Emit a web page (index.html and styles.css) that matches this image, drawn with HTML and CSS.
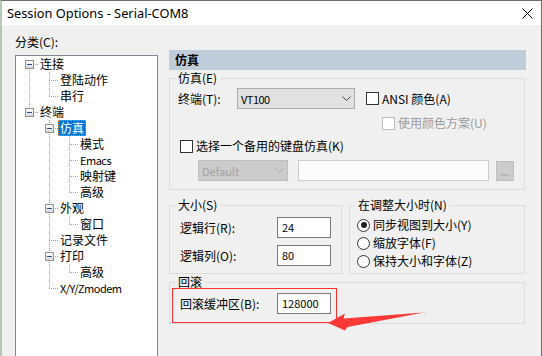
FILE: index.html
```html
<!DOCTYPE html>
<html lang="zh-CN">
<head>
<meta charset="utf-8">
<title>Session Options - Serial-COM8</title>
<link rel="stylesheet" href="styles.css">
</head>
<body>
<div class="window">
  <div class="titlebar">
    <span class="title">Session Options - Serial-COM8</span>
    <svg class="close" width="11" height="11" viewBox="0 0 11 11"><path d="M0.5 0.5L10.5 10.5M10.5 0.5L0.5 10.5" stroke="#000" stroke-width="1" fill="none"/></svg>
  </div>
  <div class="main">
    <div class="left">
      <div class="cat-label">分类(C):</div>
      <div class="tree">
        <div class="row"><span class="c vbh"><span class="box"><i></i></span></span><span class="t">连接</span></div>
        <div class="row"><span class="c v"></span><span class="c vh"></span><span class="t">登陆动作</span></div>
        <div class="row"><span class="c v"></span><span class="c vth"></span><span class="t">串行</span></div>
        <div class="row"><span class="c vth"><span class="box"><i></i></span></span><span class="t">终端</span></div>
        <div class="row"><span class="c"></span><span class="c vh"><span class="box"><i></i></span></span><span class="t sel">仿真</span></div>
        <div class="row"><span class="c"></span><span class="c v"></span><span class="c vh"></span><span class="t">模式</span></div>
        <div class="row"><span class="c"></span><span class="c v"></span><span class="c vh"></span><span class="t lat tight">Emacs</span></div>
        <div class="row"><span class="c"></span><span class="c v"></span><span class="c vh"></span><span class="t">映射键</span></div>
        <div class="row"><span class="c"></span><span class="c v"></span><span class="c vth"></span><span class="t">高级</span></div>
        <div class="row"><span class="c"></span><span class="c vh"><span class="box"><i></i></span></span><span class="t">外观</span></div>
        <div class="row"><span class="c"></span><span class="c v"></span><span class="c vth"></span><span class="t">窗口</span></div>
        <div class="row"><span class="c"></span><span class="c vh"></span><span class="t">记录文件</span></div>
        <div class="row"><span class="c"></span><span class="c vh"><span class="box"><i></i></span></span><span class="t">打印</span></div>
        <div class="row"><span class="c"></span><span class="c v"></span><span class="c vth"></span><span class="t">高级</span></div>
        <div class="row"><span class="c"></span><span class="c vth"></span><span class="t lat tight">X/Y/Zmodem</span></div>
      </div>
    </div>
    <div class="right">
      <div class="header">仿真</div>

      <fieldset class="group g-emu">
        <legend>仿真(E)</legend>
        <div class="r1">
          <span class="lbl-t">终端(T):</span>
          <span class="combo vt"><span class="lat tight">VT100</span><span class="chev"><svg width="9" height="5" viewBox="0 0 9 5"><path d="M0.5 0.5L4.5 4.5L8.5 0.5" stroke="#444" fill="none"/></svg></span></span>
          <span class="cb ansi"></span><span class="cbt">ANSI 颜色(A)</span>
        </div>
        <div class="r2">
          <span class="cb dis"></span><span class="cbt">使用颜色方案(U)</span>
        </div>
        <div class="r3">
          <span class="cb"></span><span class="cbt">选择一个备用的键盘仿真(K)</span>
        </div>
        <div class="r4">
          <span class="combo def"><span class="lat">Default</span><span class="chev"><svg width="9" height="5" viewBox="0 0 9 5"><path d="M0.5 0.5L4.5 4.5L8.5 0.5" stroke="#a8a8a8" fill="none"/></svg></span></span>
          <span class="tf"></span>
          <span class="dots">...</span>
        </div>
      </fieldset>

      <div class="pair">
        <fieldset class="group g-size">
          <legend>大小(S)</legend>
          <div class="gbody size-body">
            <div class="fr"><span class="lbl">逻辑行(R):</span><span class="inp lat">24</span></div>
            <div class="fr"><span class="lbl">逻辑列(O):</span><span class="inp lat">80</span></div>
          </div>
        </fieldset>
        <fieldset class="group g-resize">
          <legend>在调整大小时(N)</legend>
          <div class="gbody resize-body">
            <div class="rr"><span class="rb"><i></i></span><span class="cbt">同步视图到大小(Y)</span></div>
            <div class="rr"><span class="rb"></span><span class="cbt">缩放字体(F)</span></div>
            <div class="rr"><span class="rb"></span><span class="cbt">保持大小和字体(Z)</span></div>
          </div>
        </fieldset>
      </div>

      <fieldset class="group g-scroll">
        <legend>回滚</legend>
        <div class="redbox">
          <div class="fr"><span class="lbl">回滚缓冲区(B):</span><span class="inp lat">128000</span></div>
        </div>
      </fieldset>
    </div>
  </div>
  <svg class="arrow" width="540" height="355" viewBox="2 1 540 355"><polygon points="328,323 345,313.5 343.5,318.5 424,312.5 347.5,327 345,330.5" fill="#ff3838"/></svg>
</div>
</body>
</html>
```

FILE: styles.css
```css
* { box-sizing: border-box; }
html, body { margin: 0; padding: 0; }
body {
  width: 542px;
  height: 356px;
  overflow: hidden;
  font-family: "Noto Sans CJK SC", "Noto Sans", sans-serif;
  font-size: 12px;
  color: #000;
  background: #f0f0f0;
}
.window {
  position: relative;
  width: 542px;
  height: 356px;
  background: #f0f0f0;
  border-top: 1px solid #707070;
  border-right: 1px solid #707070;
  border-left: 2px solid #b3c9b3;
  display: flex;
  flex-direction: column;
  overflow: hidden;
}
.titlebar {
  height: 24px;
  flex: none;
  background: #fff;
  display: flex;
  align-items: center;
  justify-content: space-between;
  padding: 0 8px 0 5px;
}
.title {
  font-family: "Noto Sans", "Open Sans", sans-serif;
  font-size: 12.8px;
  line-height: 16px;
  white-space: nowrap;
}
.close { display: block; }

.lat { font-size: 11px; }
.lat.tight { letter-spacing: -0.5px; }

.main { display: flex; flex: 1; min-height: 0; }
.left { flex: none; width: 156px; padding: 9px 0 0 13px; }
.cat-label { line-height: 16px; height: 16px; }
.tree {
  margin-top: 5px;
  width: 143px;
  height: 330px;
  border: 1px solid #828790;
  background: #fff;
  padding-left: 3px;
}
.row { display: flex; height: 16px; }
.c {
  flex: none;
  width: 20px;
  height: 16px;
  display: flex;
  align-items: flex-start;
  background-repeat: no-repeat;
}
.v {
  background-image: repeating-linear-gradient(to bottom, #a0a0a0 0 1px, transparent 1px 2px);
  background-size: 1px 16px;
  background-position: 10px 0;
}
.vh {
  background-image: repeating-linear-gradient(to bottom, #a0a0a0 0 1px, transparent 1px 2px),
                    repeating-linear-gradient(to right, #a0a0a0 0 1px, transparent 1px 2px);
  background-size: 1px 16px, 10px 1px;
  background-position: 10px 0, 10px 8px;
}
.vth {
  background-image: repeating-linear-gradient(to bottom, #a0a0a0 0 1px, transparent 1px 2px),
                    repeating-linear-gradient(to right, #a0a0a0 0 1px, transparent 1px 2px);
  background-size: 1px 9px, 10px 1px;
  background-position: 10px 0, 10px 8px;
}
.vbh {
  background-image: repeating-linear-gradient(to bottom, #a0a0a0 0 1px, transparent 1px 2px),
                    repeating-linear-gradient(to right, #a0a0a0 0 1px, transparent 1px 2px);
  background-size: 1px 8px, 10px 1px;
  background-position: 10px 8px, 10px 8px;
}
.box {
  width: 9px;
  height: 9px;
  margin: 4px 0 0 6px;
  border: 1px solid #919191;
  background: linear-gradient(#ffffff, #d9d9d9);
  display: flex;
  align-items: center;
  justify-content: center;
}
.box i { display: block; width: 5px; height: 1px; background: #2a4b8c; }
.t { padding: 0 1px; line-height: 16px; height: 16px; white-space: nowrap; }
.sel {
  background: #0078d7;
  color: #fff;
  margin-left: -1px;
  padding: 0 2px;
  outline: 1px dotted #ff8728;
  outline-offset: -1px;
}

.right {
  flex: none;
  margin-left: 11px;
  padding-top: 25px;
  width: 357px;
  display: flex;
  flex-direction: column;
  align-items: flex-start;
}
.header {
  width: 357px;
  height: 20px;
  background: #bfcddb;
  font-weight: bold;
  line-height: 20px;
  padding-left: 6px;
}
fieldset.group {
  margin: 0;
  padding: 0;
  min-width: 0;
  border: 1px solid #dcdcdc;
}
legend {
  padding: 0 3px;
  margin-left: 5px;
  line-height: 16px;
  height: 16px;
  white-space: nowrap;
}
.g-emu { width: 356px; margin-top: 10px; padding-bottom: 8px !important; }
.r1 { display: flex; align-items: center; height: 21px; margin-top: 2px; padding-left: 8px; }
.lbl-t { width: 59px; flex: none; }
.combo {
  flex: none;
  height: 21px;
  border: 1px solid #adadad;
  background: #e1e1e1;
  display: flex;
  align-items: center;
  justify-content: space-between;
  padding-left: 3px;
  line-height: 16px;
}
.chev { width: 16px; display: flex; justify-content: center; align-items: center; }
.chev svg { display: block; }
.combo.vt { width: 118px; }
.combo.def { width: 90px; background: #cccccc; border-color: #bfbfbf; color: #a0a0a0; }
.cb {
  flex: none;
  width: 13px;
  height: 13px;
  border: 1px solid #333;
  background: #fff;
}
.cb.ansi { margin-left: 11px; }
.cb.dis { border-color: #bcbcbc; background: #fff; }
.cbt { margin-left: 3px; line-height: 16px; white-space: nowrap; }
.r2 { display: flex; align-items: center; height: 16px; margin-top: 6px; padding-left: 212px; color: #9a9a9a; }
.r3 { display: flex; align-items: center; height: 16px; margin-top: 7px; padding-left: 10px; }
.r4 { display: flex; align-items: center; height: 21px; margin-top: 6px; padding-left: 28px; }
.tf {
  flex: none;
  width: 191px;
  height: 21px;
  margin-left: 10px;
  border: 1px solid #cccccc;
  background: #fbfbfb;
}
.dots {
  flex: none;
  width: 18px;
  height: 20px;
  margin-left: 7px;
  background: #cccccc;
  border: 1px solid #bfbfbf;
  color: #9a9a9a;
  text-align: center;
  line-height: 18px;
  font-size: 11px;
}

.pair { display: flex; gap: 7px; margin-top: 7px; }
.g-size { width: 173px; }
.g-resize { width: 176px; }
.size-body { padding: 4px 0 7px 10px; }
.fr { display: flex; align-items: center; height: 21px; }
.fr + .fr { margin-top: 7px; }
.lbl { width: 97px; flex: none; white-space: nowrap; }
.inp {
  flex: none;
  width: 54px;
  height: 21px;
  border: 1px solid #7a7a7a;
  background: #fff;
  padding-left: 4px;
  line-height: 19px;
}
.resize-body { padding: 3px 0 3px 7px; }
.rr { display: flex; align-items: center; height: 18px; }
.rb {
  flex: none;
  width: 13px;
  height: 13px;
  border: 1px solid #333;
  border-radius: 50%;
  background: #fff;
  display: flex;
  align-items: center;
  justify-content: center;
}
.rb i { display: block; width: 6px; height: 6px; border-radius: 50%; background: #222; }

.g-scroll { width: 356px; margin-top: 10px; }
.redbox {
  margin: -2px 0 0 2px;
  width: 165px;
  height: 35px;
  border: 1px solid #ff3030;
  padding: 4px 0 0 7px;
}
.arrow { position: absolute; left: 0; top: 0; pointer-events: none; }
```
